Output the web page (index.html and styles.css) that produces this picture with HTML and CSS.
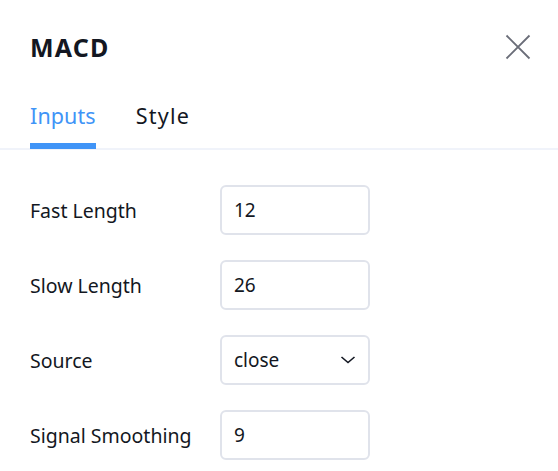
FILE: index.html
```html
<!DOCTYPE html>
<html lang="en">

<head>
	<meta charset="UTF-8">
	<meta name="viewport" content="width=device-width, initial-scale=1.0">
	<title>MACD</title>
	<link rel="stylesheet" href="styles.css">
</head>

<body>
	<div class="dialog">
		<div class="header">
			<div class="title">MACD</div>
			<button class="close" title="Close">
				<svg width="26" height="26" viewBox="0 0 26 26">
					<path d="M1.5 1.5 L24.5 24.5 M24.5 1.5 L1.5 24.5" stroke="#6a6d78" stroke-width="1.8" fill="none" />
				</svg>
			</button>
		</div>
		<div class="tabs">
			<div class="tab active">Inputs</div>
			<div class="tab">Style</div>
		</div>
		<div class="content">
			<div class="row">
				<label for="fast">Fast Length</label>
				<input type="text" id="fast" value="12">
			</div>
			<div class="row">
				<label for="slow">Slow Length</label>
				<input type="text" id="slow" value="26">
			</div>
			<div class="row">
				<label>Source</label>
				<div class="select">
					<span>close</span>
					<svg width="16" height="10" viewBox="0 0 16 10">
						<path d="M1.5 2 L8 7.5 L14.5 2" stroke="#131722" stroke-width="1.6" fill="none" />
					</svg>
				</div>
			</div>
			<div class="row">
				<label for="signal">Signal Smoothing</label>
				<input type="text" id="signal" value="9">
			</div>
		</div>
	</div>
</body>

</html>
```

FILE: styles.css
```css
body {
	margin: 0;
	background: #fff;
	font-family: "Noto Sans", sans-serif;
	color: #131722;
}

.dialog {
	width: 558px;
}

.header {
	display: flex;
	align-items: center;
	justify-content: space-between;
	height: 94px;
	padding: 0 27px 0 30px;
}

.title {
	font-size: 25px;
	font-weight: bold;
	letter-spacing: 1.2px;
}

.close {
	border: none;
	background: none;
	padding: 0;
	cursor: pointer;
	display: flex;
}

.tabs {
	display: flex;
	gap: 40px;
	padding: 0 30px;
	border-bottom: 2px solid #f0f3fa;
	height: 54px;
}

.tab {
	font-size: 21.5px;
	letter-spacing: 0.1px;
	line-height: 44px;
	height: 48px;
	box-sizing: border-box;
	cursor: pointer;
}

.tab:last-child {
	letter-spacing: 1.2px;
}

.tab.active {
	color: #4094f7;
	border-bottom: 6px solid #4094f7;
	height: 55px;
}

.content {
	display: flex;
	flex-direction: column;
	gap: 25px;
	padding: 35px 30px 0;
}

.row {
	display: flex;
	align-items: center;
	height: 50px;
	font-size: 19.5px;
}

.row label {
	width: 190px;
}

.row input,
.select {
	box-sizing: border-box;
	width: 150px;
	height: 50px;
	border: 2px solid #e0e3eb;
	border-radius: 6px;
	padding: 0 12px;
	font-family: inherit;
	font-size: 19px;
	color: #131722;
	outline: none;
}

.select {
	display: flex;
	align-items: center;
	justify-content: space-between;
}
```
